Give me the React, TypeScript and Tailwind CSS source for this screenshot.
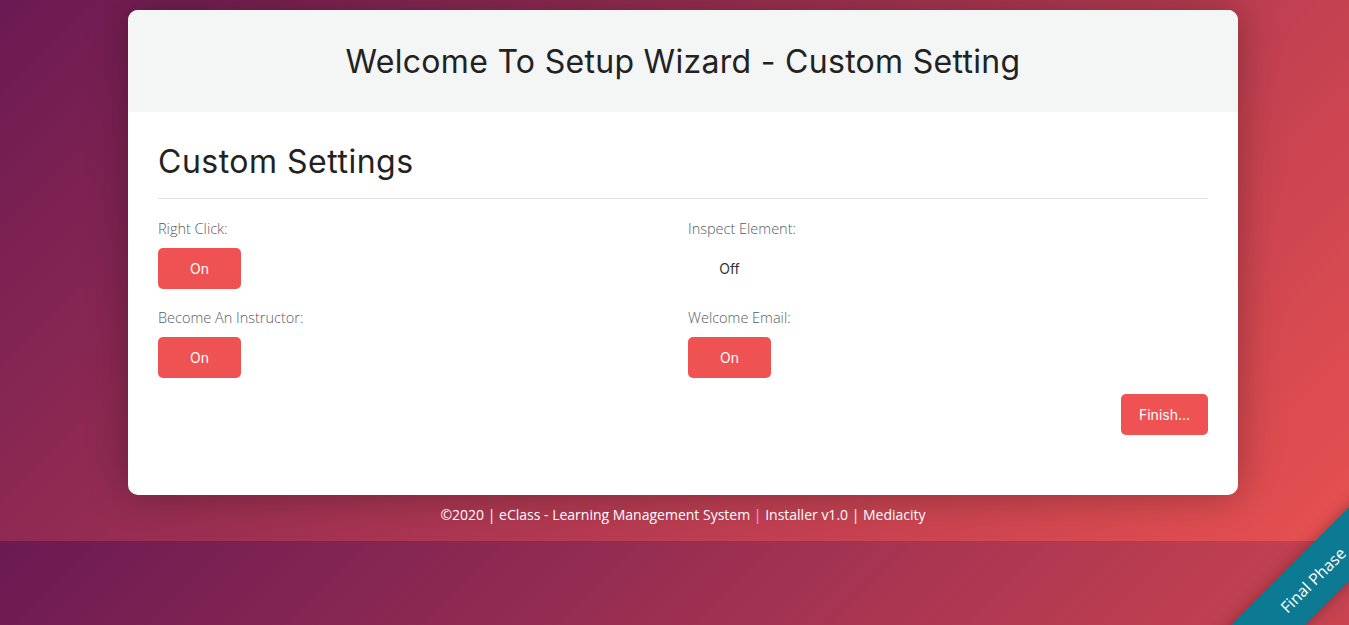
import React from "react";

function Toggle({ on }: { on: boolean }) {
  return (
    <button
      className={
        "w-[83px] h-[41px] rounded-[5px] text-[14px] font-[Inter,sans-serif] " +
        (on ? "bg-[#ee5253] text-white" : "bg-transparent text-[#333]")
      }
    >
      {on ? "On" : "Off"}
    </button>
  );
}

function Field({ label, on }: { label: string; on: boolean }) {
  return (
    <div className="flex flex-col items-start">
      <div className="font-['Open_Sans',sans-serif] font-light text-[14.5px] leading-[20px] text-[#555b66]">
        {label}
      </div>
      <div className="mt-[9px]">
        <Toggle on={on} />
      </div>
    </div>
  );
}

export default function App() {
  return (
    <div className="relative h-[625px] overflow-hidden bg-[linear-gradient(135deg,#6b1a53,#e85150)] bg-[length:100%_541px] bg-repeat-y">
      <div className="h-[541px] pt-[10px] pl-[128px]">
        <div className="w-[1110px] rounded-[10px] bg-white overflow-hidden shadow-[0_0_40px_rgba(0,0,0,0.3)]">
          <div className="h-[102px] bg-[#f4f5f5] flex items-center justify-center">
            <h1 className="text-[32px] leading-[44px] pt-[2px] text-[#222] font-[Inter,sans-serif] tracking-[0.3px]">
              Welcome To Setup Wizard - Custom Setting
            </h1>
          </div>
          <div className="px-[30px] pt-[30px] pb-[60px]">
            <h2 className="text-[32px] leading-[40px] text-[#222] font-[Inter,sans-serif] tracking-[0.5px]">
              Custom Settings
            </h2>
            <div className="mt-[16px] border-t border-[#e2e2e2]" />
            <div className="mt-[20px] grid grid-cols-[530px_1fr] gap-y-[19px]">
              <Field label="Right Click:" on={true} />
              <Field label="Inspect Element:" on={false} />
              <Field label="Become An Instructor:" on={true} />
              <Field label="Welcome Email:" on={true} />
            </div>
            <div className="mt-[16px] flex justify-end">
              <button className="w-[87px] h-[41px] rounded-[5px] bg-[#ee5253] text-white text-[14px] font-[Inter,sans-serif]">
                Finish...
              </button>
            </div>
          </div>
        </div>
        <div className="w-[1110px] mt-[9px] text-center text-white text-[14px] font-['Open_Sans',sans-serif]">
          ©2020 | eClass - Learning Management System <span className="text-[#f0a0ff]">|</span> Installer v1.0 | Mediacity
        </div>
      </div>
      <div className="absolute left-[1163px] top-[554px] w-[300px] h-[52px] bg-[#0c7a92] -rotate-45 flex items-center justify-center shadow-[0_0_15px_rgba(0,0,0,0.3)]">
        <span className="text-white text-[16px] font-['Open_Sans',sans-serif]">Final Phase</span>
      </div>
    </div>
  );
}
